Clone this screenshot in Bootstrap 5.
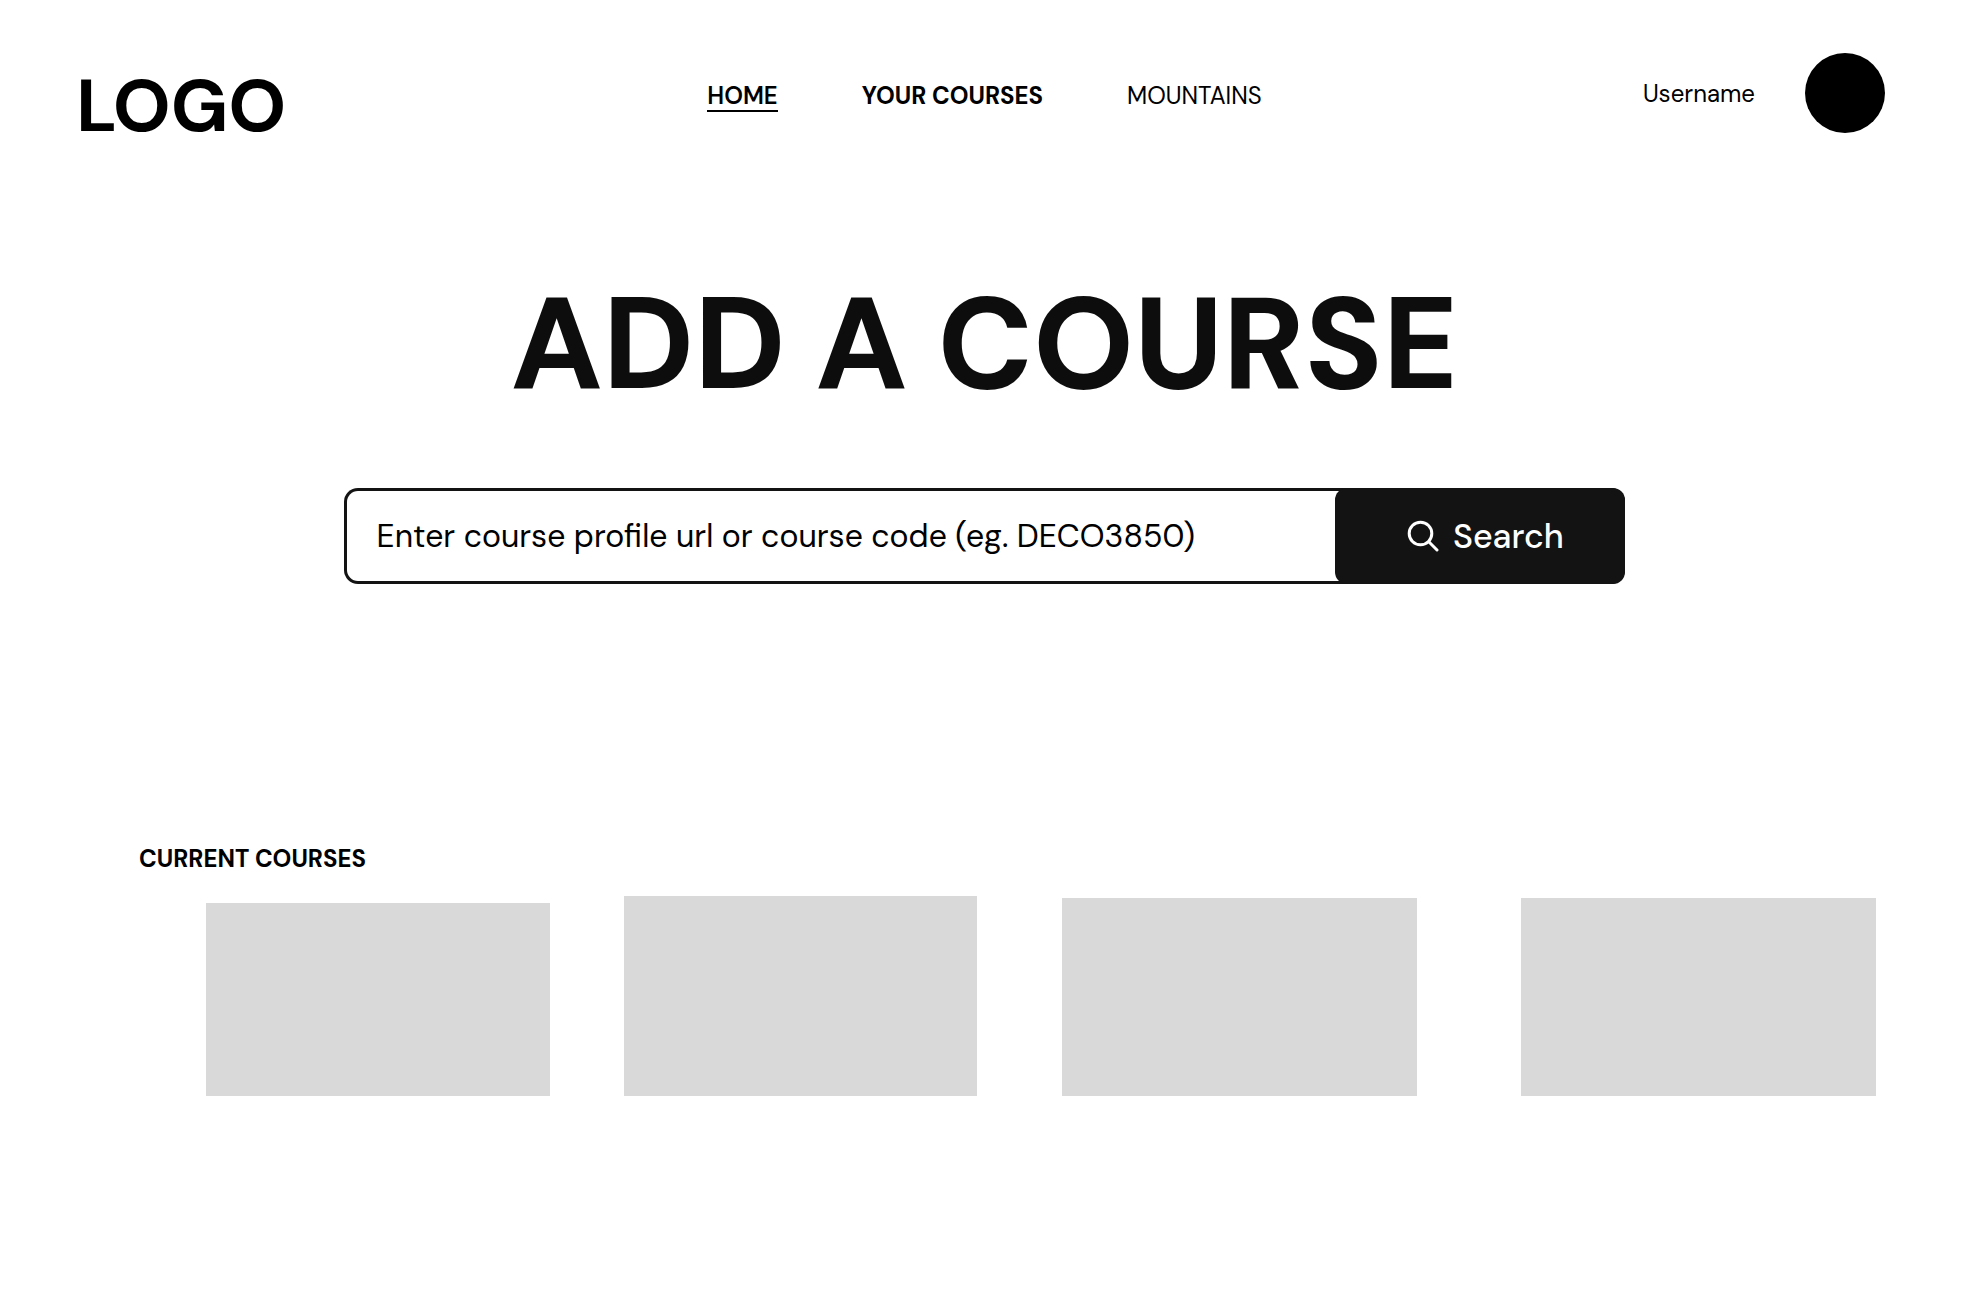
<!DOCTYPE html>
<html lang="en">
<head>
<meta charset="utf-8">
<meta name="viewport" content="width=device-width, initial-scale=1">
<title>Add a course</title>
<link href="https://cdn.jsdelivr.net/npm/bootstrap@5.3.0/dist/css/bootstrap.min.css" rel="stylesheet">
<style>
  body { font-family: "DM Sans", Inter, "Open Sans", sans-serif; color: #000; background: #fff; }
  .site-header { padding: 53px 84px 0; min-height: 133px; }
  .brand { font-size: 74px; line-height: 80px; font-weight: 700; margin: 13px 0 -13px -8px; }
  .main-links { gap: 84px; font-size: 24px; line-height: 28px; padding-top: 29px; }
  .main-links a { color: #000; text-decoration: none; border-bottom: 2px solid transparent; }
  .main-links a.current { border-color: #000; }
  .user-name { font-size: 24px; line-height: 28px; margin-right: 50px; padding-top: 2px; color: #000; }
  .avatar { width: 80px; height: 80px; background: #000; }
  .hero-title { font-size: 129px; line-height: 144px; font-weight: 800; color: #0d0d0d; margin: 139px 0 0; }
  .course-search { width: 65.1%; margin: 72px auto 0; height: 96px; background: #131313; border-radius: 14px; padding: 3px; }
  .course-search .form-control { border: 0; border-radius: 11px 0 0 11px; padding: 0 30px; font-size: 32px; color: #000; background: #fff; }
  .course-search .form-control::placeholder { color: #000; opacity: 1; }
  .course-search .btn { flex: none; width: 290px; margin: -3px -3px -3px -12px; padding: 0 12px 0 22px; border: 0; border-radius: 12px; background: #131313; color: #fff; font-size: 34px; font-weight: 500; gap: 14px; position: relative; }
  .course-search svg { width: 32px; height: 32px; }
  .section-title { font-size: 24px; line-height: 28px; font-weight: 700; margin: 261px 0 0 139px; }
  .course-row { padding: 23px 93px 0 206px; }
  .tile { background: #d9d9d9; min-width: 0; flex-basis: 0; }
  .tile-a { flex-grow: 344; height: 193px; margin-right: 74px; }
  .tile-b { flex-grow: 353; height: 200px; margin-right: 85px; }
  .tile-c { flex-grow: 355; height: 198px; }
  .tile-c + .tile-c { margin-left: 104px; }
</style>
<script src="https://cdn.jsdelivr.net/npm/bootstrap@5.3.0/dist/js/bootstrap.bundle.min.js" defer></script>
</head>
<body>
<header class="site-header d-flex align-items-start">
  <div class="col d-flex"><a href="#" class="brand text-black text-decoration-none">LOGO</a></div>
  <nav class="main-links d-flex" aria-label="Main">
    <a href="#" class="current fw-semibold" aria-current="page">HOME</a>
    <a href="#" class="fw-bold">YOUR COURSES</a>
    <a href="#">MOUNTAINS</a>
  </nav>
  <div class="col d-flex justify-content-end align-items-center">
    <span class="user-name">Username</span>
    <span class="avatar rounded-circle"></span>
  </div>
</header>
<main>
  <h1 class="hero-title text-center">ADD A COURSE</h1>
  <form class="course-search d-flex" role="search">
    <input type="search" class="form-control shadow-none" aria-label="Course profile url or course code" placeholder="Enter course profile url or course code (eg. DECO3850)">
    <button type="button" class="btn d-flex align-items-center justify-content-center">
      <svg viewBox="0 0 32 32" fill="none" stroke="#fff" stroke-width="3" stroke-linecap="round" aria-hidden="true"><circle cx="13.5" cy="13.5" r="11.3"/><path d="M21.8 21.8 30 30"/></svg>
      Search
    </button>
  </form>
  <section>
    <h2 class="section-title">CURRENT COURSES</h2>
    <div class="course-row d-flex align-items-end">
      <div class="tile tile-a"></div>
      <div class="tile tile-b"></div>
      <div class="tile tile-c"></div>
      <div class="tile tile-c"></div>
    </div>
  </section>
</main>
</body>
</html>
